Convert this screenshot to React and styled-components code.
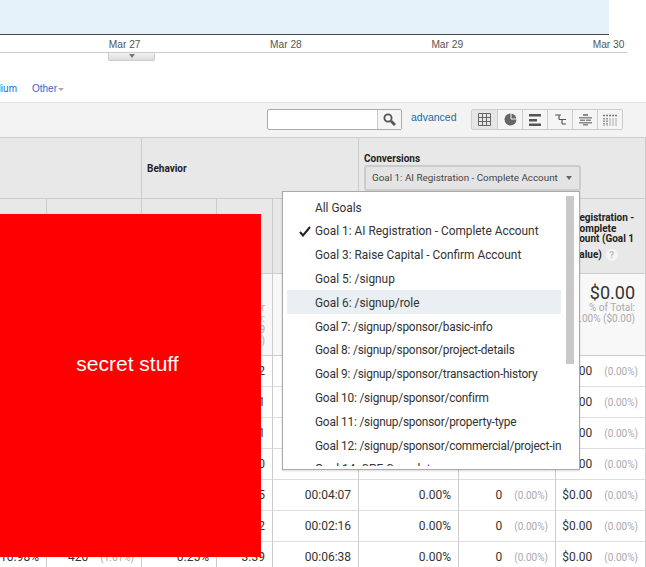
import styled, { createGlobalStyle } from "styled-components"

const Global = createGlobalStyle`
    html, body {
        margin: 0;
        padding: 0;
        background: #fff;
        overflow: hidden;
    }
`

const Page = styled.div`
    position: relative;
    width: 646px;
    height: 567px;
    overflow: hidden;
    font-family: Roboto, "Liberation Sans", sans-serif;
    color: #333;
`

const Plot = styled.div`
    width: 609px;
    height: 34px;
    background: #e5f2f9;
    border-bottom: 1px solid #444;
`

const Axis = styled.div`
    display: flex;
    width: 627px;
    height: 18px;
    padding-left: 44px;
    box-sizing: border-box;
    border-bottom: 1px solid #ccc;
    font-family: "Liberation Sans", Arial, sans-serif;
    font-size: 10.2px;
    line-height: 20px;
    color: #555;
`

const AxisLabel = styled.span`
    width: 161.3px;
    flex: none;
    text-align: center;
`

const Handle = styled.div`
    display: flex;
    justify-content: center;
    width: 45px;
    height: 7px;
    margin-left: 108px;
    background: linear-gradient(#f2f2f2, #dcdcdc);
    border: 1px solid #ccc;
    border-top: 0;
    border-radius: 0 0 2px 2px;
`

const Notch = styled.i`
    width: 0;
    height: 0;
    margin-top: 1px;
    border: 3px solid transparent;
    border-top: 4px solid #777;
`

const Links = styled.div`
    display: flex;
    align-items: center;
    height: 26px;
    margin: 14px 0 1px -18.6px;
    gap: 15px;
    font-family: "Liberation Sans", Arial, sans-serif;
    font-size: 10px;
    color: #2a6ac9;
`

const Caret = styled.i`
    display: inline-block;
    margin-left: 1px;
    vertical-align: 1px;
    border: 3px solid transparent;
    border-top: 3px solid #aaa;
    border-bottom: 0;
`

const Toolbar = styled.div`
    display: flex;
    align-items: flex-start;
    height: 35px;
    padding: 6px 0 0 267px;
    box-sizing: border-box;
    background: #f3f3f3;
    border-top: 1px solid #e2e2e2;
`

const Search = styled.div`
    display: flex;
    width: 135px;
    height: 21px;
    box-sizing: border-box;
    background: #fff;
    border: 1px solid #aaa;
    border-radius: 2px;
`

const SearchField = styled.div`
    width: 109px;
`

const SearchButton = styled.div`
    flex: 1;
    display: flex;
    align-items: center;
    justify-content: center;
    background: #f5f5f5;
    border-left: 1px solid #ccc;
`

const Advanced = styled.a`
    width: 60px;
    margin-left: 9px;
    font-family: "Liberation Sans", Arial, sans-serif;
    font-size: 10.5px;
    line-height: 16px;
    color: #1a6aa8;
`

const Views = styled.div`
    display: flex;
    height: 21px;
    box-sizing: border-box;
    border: 1px solid #ccc;
    border-radius: 2px;
`

const ViewButton = styled.div`
    width: 25px;
    flex: none;
    display: flex;
    align-items: center;
    justify-content: center;
    box-sizing: border-box;
    background: ${p => (p.$active ? "#e6e6e6" : "#f5f5f5")};
    border-left: ${p => (p.$first ? "0" : "1px solid #ccc")};
`

const Table = styled.table`
    width: 646px;
    table-layout: fixed;
    border-collapse: separate;
    border-spacing: 0;
    border-top: 1px solid #ccc;
`

const GroupCell = styled.th`
    height: 61px;
    padding: 0 0 0 5px;
    box-sizing: border-box;
    background: #e8e8e8;
    border-right: 1px solid #ccc;
    border-bottom: 1px solid #ccc;
    text-align: left;
    font-size: 10px;
    font-weight: 700;
    color: #222;
    vertical-align: ${p => (p.$top ? "top" : "middle")};
`

const GroupTitle = styled.div`
    margin-top: 15px;
    line-height: 12px;
`

const Select = styled.div`
    display: flex;
    align-items: center;
    justify-content: space-between;
    width: 217px;
    height: 26px;
    padding: 0 7px 1px 6px;
    box-sizing: border-box;
    background: #e4e4e4;
    border: 2px solid #ccc;
    border-radius: 3px;
    font-size: 9.85px;
    font-weight: 400;
    color: #444;
    white-space: nowrap;
`

const SelectCaret = styled.i`
    border: 3.5px solid transparent;
    border-top: 4px solid #666;
    border-bottom: 0;
`

const HeadCell = styled.th`
    height: 75px;
    padding: 14px 0 0 6px;
    box-sizing: border-box;
    background: #e8e8e8;
    border-right: 1px solid #ccc;
    border-bottom: 1px solid #ccc;
    text-align: left;
    vertical-align: top;
    font-size: 10px;
    line-height: 10.7px;
    font-weight: 700;
    color: #222;
`

const HeadLine = styled.div`
    padding-left: ${p => p.$indent}px;
    margin-top: ${p => p.$drop || 0}px;
    white-space: nowrap;
`

const Help = styled.span`
    display: inline-block;
    width: 12px;
    height: 12px;
    margin-left: 4px;
    border-radius: 50%;
    background: #f4f4f4;
    color: #bbb;
    font-size: 9px;
    line-height: 12px;
    text-align: center;
`

const TotalCell = styled.td`
    height: 82px;
    padding: 8px ${p => p.$pad || 7}px 0 0;
    box-sizing: border-box;
    background: #f8f8f8;
    border-right: 1px solid #ccc;
    border-bottom: 1px solid #ccc;
    text-align: right;
    vertical-align: top;
`

const TotalValue = styled.div`
    font-size: 18px;
    line-height: 22px;
    height: 20px;
    color: #333;
    white-space: nowrap;
`

const TotalNote = styled.div`
    font-size: 10px;
    line-height: 11px;
    color: #aaa;
    white-space: nowrap;
`

const Cell = styled.td`
    height: 31px;
    padding: 0 7px 0 0;
    box-sizing: border-box;
    background: #fff;
    border-right: 1px solid #ccc;
    border-bottom: 1px solid #ddd;
    font-size: 12px;
    text-align: right;
    white-space: nowrap;
    color: #333;
`

const CellSplit = styled.div`
    display: flex;
    justify-content: flex-end;
    align-items: baseline;
`

const Amount = styled.span`
    flex: 1;
    text-align: right;
    padding-right: 12px;
`

const Share = styled.span`
    font-size: 10px;
    color: #aaa;
`

const Redaction = styled.div`
    position: absolute;
    left: 0;
    top: 214px;
    width: 261px;
    height: 343px;
    padding: 0 6px 43px 0;
    box-sizing: border-box;
    display: flex;
    align-items: center;
    justify-content: center;
    background: #f00;
    color: #fff;
    font-family: "Liberation Sans", Arial, sans-serif;
    font-size: 21px;
`

const Dropdown = styled.div`
    position: absolute;
    left: 282px;
    top: 191px;
    width: 298px;
    height: 279px;
    padding: 3px 5px 0 4px;
    box-sizing: border-box;
    display: flex;
    align-items: flex-start;
    gap: 5px;
    background: #fff;
    border: 1px solid #aaa;
    box-shadow: 0 1px 2px rgba(0, 0, 0, 0.15);
`

const Options = styled.div`
    width: 274px;
    height: 271px;
    flex: none;
    overflow: hidden;
`

const Option = styled.div`
    display: flex;
    align-items: center;
    height: 23.8px;
    padding: 1.5px 0 0 12px;
    box-sizing: border-box;
    background: ${p => (p.$hover ? "#e9eff2" : "transparent")};
    font-size: 11.85px;
    letter-spacing: ${p => (p.$tight ? "-0.2px" : "0")};
    color: #333;
    white-space: nowrap;
`

const CheckSlot = styled.span`
    width: 16px;
    flex: none;
    display: flex;
    align-items: center;
`

const Scrollbar = styled.div`
    width: 8px;
    height: 168px;
    margin-top: 1px;
    flex: none;
    background: #c9c9c9;
`

const goals = [
    "All Goals",
    "Goal 1: AI Registration - Complete Account",
    "Goal 3: Raise Capital - Confirm Account",
    "Goal 5: /signup",
    "Goal 6: /signup/role",
    "Goal 7: /signup/sponsor/basic-info",
    "Goal 8: /signup/sponsor/project-details",
    "Goal 9: /signup/sponsor/transaction-history",
    "Goal 10: /signup/sponsor/confirm",
    "Goal 11: /signup/sponsor/property-type",
    "Goal 12: /signup/sponsor/commercial/project-info",
    "Goal 14: CPE Complete",
]

const rows = [
    { pages: "3.52" },
    { pages: "3.41" },
    { pages: "3.21" },
    { pages: "3.60" },
    { pages: "3.45", time: "00:04:07" },
    { pages: "3.52", time: "00:02:16" },
    { rate: "10.98%", sessions: "420", share: "(1.61%)", bounce: "0.25%", pages: "3.39", time: "00:06:38" },
]

const GridIcon = () => (
    <svg width="13" height="13" viewBox="0 0 13 13" fill="none" stroke="#666">
        <path d="M.5.5h12v12H.5zM4.5.5v12M8.5.5v12M.5 4.5h12M.5 8.5h12" />
    </svg>
)

const PieIcon = () => (
    <svg width="13" height="13" viewBox="0 0 13 13">
        <circle cx="6.5" cy="6.5" r="6" fill="#666" />
        <path d="M7 0v6h6" fill="none" stroke="#f5f5f5" />
    </svg>
)

const BarsIcon = () => (
    <svg width="12" height="12" viewBox="0 0 12 12" fill="#555">
        <path d="M0 0h12v2.5H0zM0 5h8v2.5H0zM0 9.500h12V12H0z" />
    </svg>
)

const CompareIcon = () => (
    <svg width="13" height="13" viewBox="0 0 13 13" fill="none" stroke="#555" strokeWidth="1.2">
        <path d="M1 2h6M5 2v4.500M5 6.500h7M8 6.500v4.500M8 11h4" />
    </svg>
)

const PivotIcon = () => (
    <svg width="13" height="13" viewBox="0 0 13 13" fill="#888">
        <path d="M4 1h5v2H4zM0 4h13v1.500H0zM1 6.500h5V8H1zM7 6.500h5V8H7zM0 9h13v1.500H0zM4 11h5v1.500H4z" />
    </svg>
)

const TermIcon = () => (
    <svg width="14" height="12" viewBox="0 0 14 12" fill="none" stroke="#777">
        <path d="M0 1.500h14" strokeWidth="1.500" strokeDasharray="2 1" />
        <path d="M1 4v8M4 4v8" strokeWidth="1.500" strokeDasharray="1.500 1" />
        <path d="M7 4v8M10 4v8M13 4v8" stroke="#aaa" />
    </svg>
)

const SearchIcon = () => (
    <svg width="13" height="13" viewBox="0 0 13 13" fill="none" stroke="#555">
        <circle cx="5" cy="5" r="3.600" strokeWidth="1.800" />
        <path d="M8 8l4 4" strokeWidth="2.600" />
    </svg>
)

const CheckIcon = () => (
    <svg width="12" height="11" viewBox="0 0 12 11" fill="none" stroke="#222" strokeWidth="2">
        <path d="M1 6l3 3.500L11 1" />
    </svg>
)

const viewIcons = [GridIcon, PieIcon, BarsIcon, CompareIcon, PivotIcon, TermIcon]

export default function App() {
    return (
        <Page>
            <Global />
            <Plot />
            <Axis>
                <AxisLabel>Mar 27</AxisLabel>
                <AxisLabel>Mar 28</AxisLabel>
                <AxisLabel>Mar 29</AxisLabel>
                <AxisLabel>Mar 30</AxisLabel>
            </Axis>
            <Handle>
                <Notch />
            </Handle>
            <Links>
                <span>Medium</span>
                <span>
                    Other
                    <Caret />
                </span>
            </Links>
            <Toolbar>
                <Search>
                    <SearchField />
                    <SearchButton>
                        <SearchIcon />
                    </SearchButton>
                </Search>
                <Advanced>advanced</Advanced>
                <Views>
                    {viewIcons.map((Icon, i) => (
                        <ViewButton key={i} $active={i === 0} $first={i === 0}>
                            <Icon />
                        </ViewButton>
                    ))}
                </Views>
            </Toolbar>
            <Table>
                <colgroup>
                    <col width="47" />
                    <col width="95" />
                    <col width="75" />
                    <col width="56" />
                    <col width="86" />
                    <col width="100" />
                    <col width="97" />
                    <col width="90" />
                </colgroup>
                <thead>
                    <tr>
                        <GroupCell colSpan={2} />
                        <GroupCell colSpan={3}>Behavior</GroupCell>
                        <GroupCell colSpan={3} $top>
                            <GroupTitle>Conversions</GroupTitle>
                            <Select>
                                Goal 1: AI Registration - Complete Account
                                <SelectCaret />
                            </Select>
                        </GroupCell>
                    </tr>
                    <tr>
                        <HeadCell />
                        <HeadCell />
                        <HeadCell />
                        <HeadCell />
                        <HeadCell />
                        <HeadCell />
                        <HeadCell />
                        <HeadCell>
                            <HeadLine $indent={11}>Registration -</HeadLine>
                            <HeadLine $indent={11}>Complete</HeadLine>
                            <HeadLine $indent={0}>Account (Goal 1</HeadLine>
                            <HeadLine $indent={11} $drop={4}>
                                Value)
                                <Help>?</Help>
                            </HeadLine>
                        </HeadCell>
                    </tr>
                </thead>
                <tbody>
                    <tr>
                        <TotalCell />
                        <TotalCell />
                        <TotalCell />
                        <TotalCell>
                            <TotalValue />
                            <TotalNote>
                                Avg for
                                <br />
                                View:
                                <br />
                                3.59
                                <br />
                                (0.00%)
                            </TotalNote>
                        </TotalCell>
                        <TotalCell>
                            <TotalValue>00:05:27</TotalValue>
                        </TotalCell>
                        <TotalCell />
                        <TotalCell />
                        <TotalCell $pad={10}>
                            <TotalValue>$0.00</TotalValue>
                            <TotalNote>
                                % of Total:
                                <br />
                                0.00% ($0.00)
                            </TotalNote>
                        </TotalCell>
                    </tr>
                    {rows.map((r, i) => (
                        <tr key={i}>
                            <Cell>{r.rate}</Cell>
                            <Cell>
                                <CellSplit>
                                    <Amount>{r.sessions}</Amount>
                                    <Share>{r.share}</Share>
                                </CellSplit>
                            </Cell>
                            <Cell>{r.bounce}</Cell>
                            <Cell>{r.pages}</Cell>
                            <Cell>{r.time}</Cell>
                            <Cell>0.00%</Cell>
                            <Cell>
                                <CellSplit>
                                    <Amount>0</Amount>
                                    <Share>(0.00%)</Share>
                                </CellSplit>
                            </Cell>
                            <Cell>
                                <CellSplit>
                                    <Amount>$0.00</Amount>
                                    <Share>(0.00%)</Share>
                                </CellSplit>
                            </Cell>
                        </tr>
                    ))}
                </tbody>
            </Table>
            <Redaction>secret stuff</Redaction>
            <Dropdown>
                <Options>
                    {goals.map((g, i) => (
                        <Option key={g} $hover={i === 4} $tight={g.includes("sponsor")}>
                            <CheckSlot>{i === 1 && <CheckIcon />}</CheckSlot>
                            {g}
                        </Option>
                    ))}
                </Options>
                <Scrollbar />
            </Dropdown>
        </Page>
    )
}
